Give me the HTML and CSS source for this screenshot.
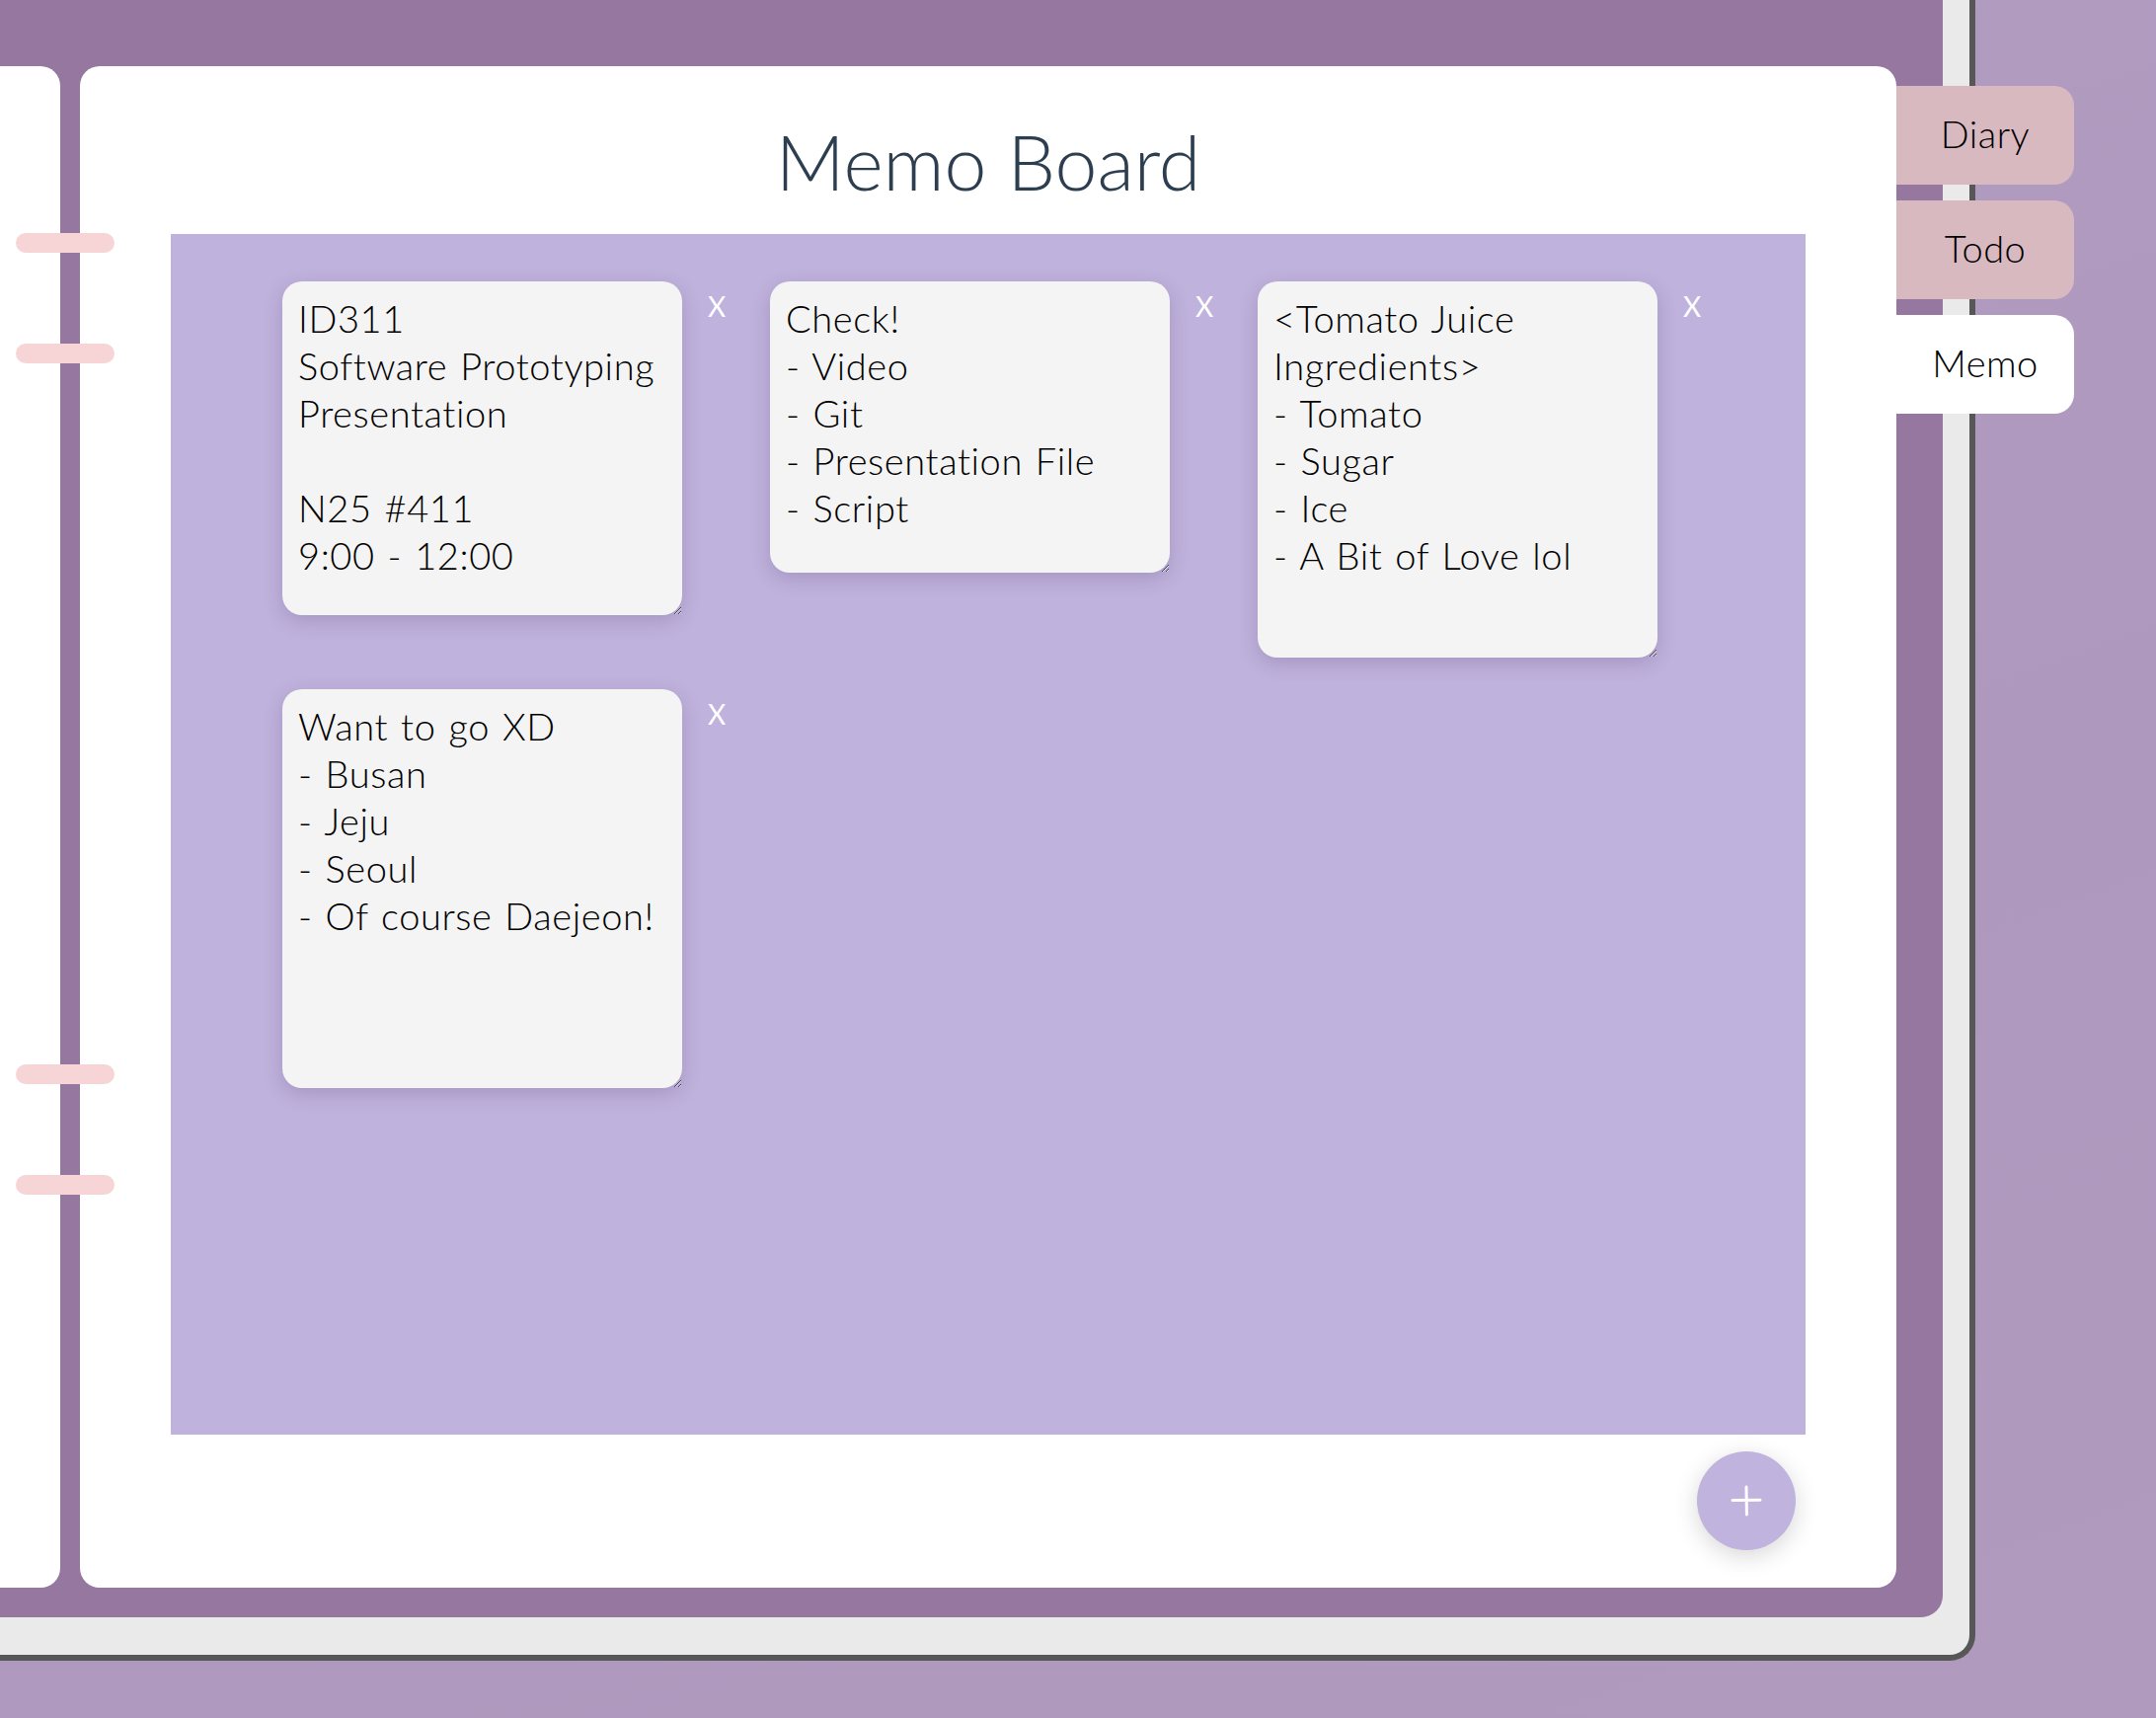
FILE: index.html
```html
<!DOCTYPE html>
<html lang="en">
<head>
    <meta charset="UTF-8">
    <meta name="viewport" content="width=device-width, initial-scale=1.0">
    <title>Memo Board</title>
    <link rel="stylesheet" href="styles.css">
</head>
<body>
    <div class="notebook">
        <div class="cover">
            <div class="page page-left"></div>

            <!-- binder rings over the spine -->
            <div class="rings">
                <div class="ring-group">
                    <span class="ring"></span>
                    <span class="ring"></span>
                </div>
                <div class="ring-group">
                    <span class="ring"></span>
                    <span class="ring"></span>
                </div>
            </div>

            <div class="page page-right">
                <h1 class="board-title">Memo Board</h1>

                <div class="board" id="board">
                    <div class="memo">
                        <textarea class="memo-text" style="height: 338px;">ID311
Software Prototyping
Presentation

N25 #411
9:00 - 12:00</textarea>
                        <button class="memo-delete">X</button>
                    </div>
                    <div class="memo">
                        <textarea class="memo-text" style="height: 295px;">Check!
- Video
- Git
- Presentation File
- Script</textarea>
                        <button class="memo-delete">X</button>
                    </div>
                    <div class="memo">
                        <textarea class="memo-text" style="height: 381px;">&lt;Tomato Juice Ingredients&gt;
- Tomato
- Sugar
- Ice
- A Bit of Love lol</textarea>
                        <button class="memo-delete">X</button>
                    </div>
                    <div class="memo">
                        <textarea class="memo-text" style="height: 404px;">Want to go XD
- Busan
- Jeju
- Seoul
- Of course Daejeon!</textarea>
                        <button class="memo-delete">X</button>
                    </div>
                </div>

                <div class="board-footer">
                    <button class="add-btn" id="addBtn" aria-label="Add memo">
                        <svg width="32" height="32" viewBox="0 0 32 32">
                            <path d="M16 2 L16.4 30 M2 15.6 L30 15.2" stroke="#fff" stroke-width="3" stroke-linecap="round" fill="none"/>
                        </svg>
                    </button>
                </div>

                <!-- Side tabs -->
                <nav class="tabs">
                    <a href="#" class="tab">Diary</a>
                    <a href="#" class="tab">Todo</a>
                    <a href="#" class="tab tab-active">Memo</a>
                </nav>
            </div>
        </div>
    </div>
</body>
</html>
```
FILE: styles.css
```css
body {
    margin: 0;
    font-family: Lato, "Open Sans", sans-serif;
    font-weight: 300;
    background: linear-gradient(160deg, #b39fc3 0%, #ae98bd 60%, #b09bbf 100%);
    height: 100vh;
    overflow: hidden;
}

.notebook {
    display: inline-flex;
    background-color: #eaeaea;
    padding: 0 27px 38px 0;
    border-right: 6px solid #575757;
    border-bottom: 6px solid #575757;
    border-bottom-right-radius: 26px;
}

.cover {
    position: relative;
    display: flex;
    gap: 20px;
    background-color: #95779f;
    padding: 67px 47px 30px 0;
    border-bottom-right-radius: 22px;
}

.page {
    background-color: white;
}

.page-left {
    width: 61px;
    border-radius: 0 20px 20px 0;
}

.page-right {
    position: relative;
    width: 1840px;
    height: 1541px;
    border-radius: 20px;
    display: flex;
    flex-direction: column;
}

.rings {
    position: absolute;
    left: 16px;
    top: 236px;
    height: 974px;
    display: flex;
    flex-direction: column;
    justify-content: space-between;
    z-index: 2;
}

.ring-group {
    display: flex;
    flex-direction: column;
    gap: 92px;
}

.ring {
    display: block;
    width: 100px;
    height: 20px;
    border-radius: 10px;
    background-color: #f7d4d6;
}

.board-title {
    margin: 0;
    height: 170px;
    box-sizing: border-box;
    padding-top: 50px;
    text-align: center;
    font-size: 77px;
    line-height: 1.2;
    font-weight: 300;
    color: #2c3e50;
}

.board {
    margin: 0 92px;
    height: 1216px;
    box-sizing: border-box;
    padding: 48px 0 0 113px;
    background-color: #bfb2dc;
    display: flex;
    flex-wrap: wrap;
    align-items: flex-start;
    align-content: flex-start;
    column-gap: 34px;
    row-gap: 32px;
}

.memo {
    display: flex;
    align-items: flex-start;
    gap: 15px;
}

.memo-text {
    width: 405px;
    box-sizing: border-box;
    padding: 13px 16px;
    border: none;
    outline: none;
    border-radius: 20px;
    background-color: #f4f4f4;
    box-shadow: 0 6px 20px rgba(60, 40, 90, 0.2);
    font-family: Lato, "Open Sans", sans-serif;
    font-weight: 300;
    font-size: 38px;
    line-height: 48px;
    letter-spacing: 0.6px;
    word-spacing: 2px;
    color: black;
    overflow: hidden;
    resize: both;
}

.memo-delete {
    width: 40px;
    margin-top: 11px;
    padding: 0;
    border: none;
    background: none;
    color: white;
    font-family: Lato, sans-serif;
    font-weight: 400;
    font-size: 28px;
    line-height: 1;
    cursor: pointer;
}

.board-footer {
    display: flex;
    justify-content: flex-end;
    padding-right: 102px;
    margin-top: 17px;
}

.add-btn {
    width: 100px;
    height: 100px;
    border: none;
    border-radius: 50%;
    background-color: #c0b3dd;
    box-shadow: 0 6px 24px rgba(0, 0, 0, 0.16);
    display: flex;
    align-items: center;
    justify-content: center;
    cursor: pointer;
}

.tabs {
    position: absolute;
    left: 100%;
    top: 20px;
    display: flex;
    flex-direction: column;
    gap: 16px;
    z-index: 3;
}

.tab {
    width: 180px;
    height: 100px;
    box-sizing: border-box;
    padding-bottom: 5px;
    display: flex;
    align-items: center;
    justify-content: center;
    background-color: #d9b9c0;
    border-radius: 0 20px 20px 0;
    font-size: 38px;
    letter-spacing: 0.5px;
    color: black;
    text-decoration: none;
}

.tab-active {
    background-color: white;
}
```
